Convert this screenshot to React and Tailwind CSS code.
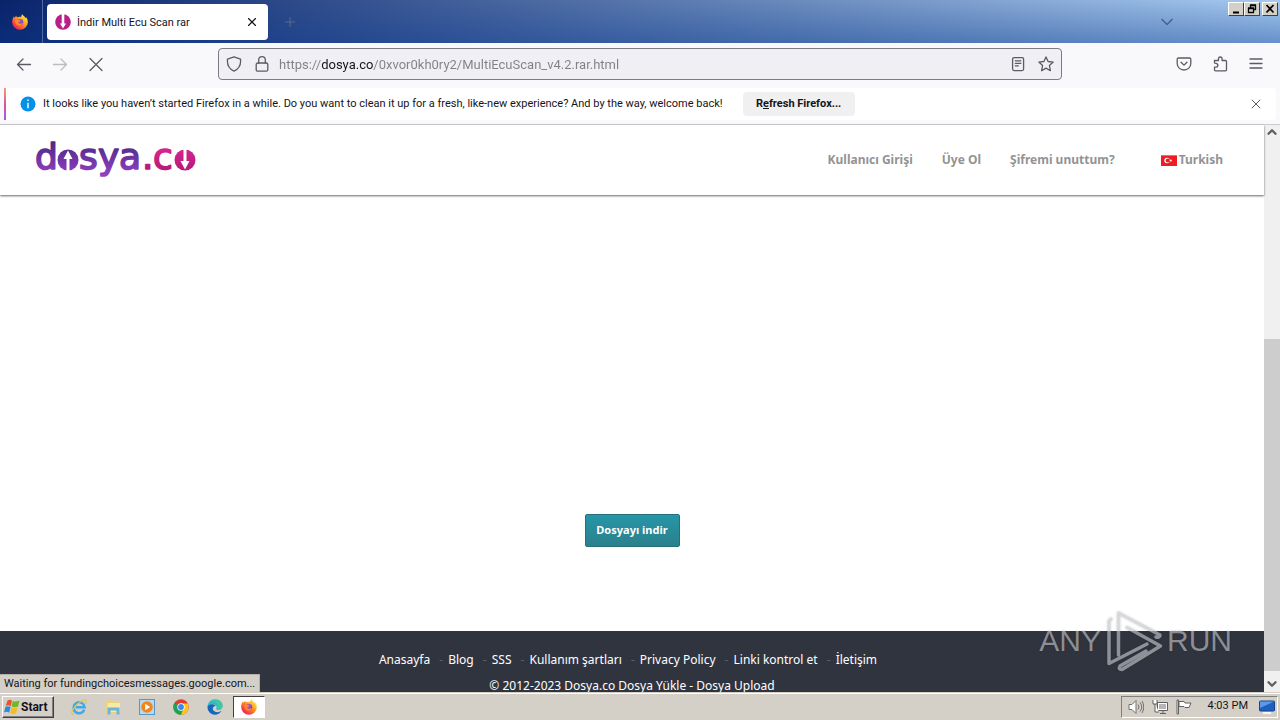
import React from "react";
import { X, Plus, ChevronDown, ChevronUp } from "lucide-react";

const navLinks = ["Kullanıcı Girişi", "Üye Ol", "Şifremi unuttum?"];

const footerLinks = [
  "Anasayfa",
  "Blog",
  "SSS",
  "Kullanım şartları",
  "Privacy Policy",
  "Linki kontrol et",
  "İletişim",
];

function FirefoxIcon({ id }) {
  return (
    <svg viewBox="0 0 16 16" className="h-4 w-4 shrink-0" aria-hidden="true">
      <defs>
        <linearGradient id={`${id}-body`} x1="0.9" y1="0.1" x2="0.2" y2="0.9">
          <stop offset="0" stopColor="#fff14a" />
          <stop offset="0.4" stopColor="#ffa21e" />
          <stop offset="0.75" stopColor="#ff5238" />
          <stop offset="1" stopColor="#e8225c" />
        </linearGradient>
        <radialGradient id={`${id}-globe`} cx="0.4" cy="0.3" r="0.8">
          <stop offset="0" stopColor="#b45be0" />
          <stop offset="1" stopColor="#6a35b5" />
        </radialGradient>
      </defs>
      <path
        d="M10.4 0.2c-1 .8-1.3 2-1.200 2.800C7.800 2.500 6.300 2.700 5.200 3.300 4.600 3 4.300 2.300 4.300 1.700 3.500 2.300 3 3 2.700 3.700c-.5-.3-.7-.9-.7-1.400C.9 3.900.2 6 .2 8.200a7.800 7.600 0 0 0 15.600 0c0-2.200-.7-4-1.800-5.200.1.500.2 1 .1 1.400C13 2.600 11.200 2 10.400.2Z"
        fill={`url(#${id}-body)`}
      />
      <circle cx="8" cy="8.200" r="3.200" fill={`url(#${id}-globe)`} />
      <path
        d="M3.200 6.200c.8-.9 2-.9 2.900-.4.700.5 1.700.3 2.200.6-.2.800-1.200 1.100-1.900 1.500-.2 1.200.9 2 2.200 1.800 1-.2 1.500-.8 2.300-.5-.5 1.700-2 2.700-3.800 2.500-2.500-.2-4.200-2.500-3.900-5.500Z"
        fill="#ff8a22"
      />
    </svg>
  );
}

function DosyaLogo() {
  return (
    <a href="#home" aria-label="dosya.co" className="block">
      <svg viewBox="0 0 168 54" className="h-[54px] w-[168px]" fontFamily="DejaVu Sans, sans-serif" fontSize="36">
        <defs>
          <linearGradient id="logo-violet" gradientUnits="userSpaceOnUse" x1="0" y1="9" x2="0" y2="43">
            <stop offset="0" stopColor="#4b2a85" />
            <stop offset="1" stopColor="#9440c4" />
          </linearGradient>
          <linearGradient id="logo-pink" gradientUnits="userSpaceOnUse" x1="0" y1="16" x2="0" y2="38">
            <stop offset="0" stopColor="#d3268f" />
            <stop offset="1" stopColor="#b51a78" />
          </linearGradient>
        </defs>
        <g fill="url(#logo-violet)" stroke="url(#logo-violet)" strokeWidth="1.600" strokeLinejoin="round">
          <text x="-1" y="36">d</text>
          <text x="43" y="36">s</text>
          <text x="62" y="36">y</text>
          <text x="83" y="36">a</text>
        </g>
        <g fill="url(#logo-pink)" stroke="url(#logo-pink)" strokeWidth="1.600" strokeLinejoin="round">
          <text x="106" y="36">.</text>
          <text x="117" y="36">c</text>
        </g>
        <circle cx="32" cy="27" r="10.500" fill="url(#logo-violet)" />
        <path d="M32 17.500l4.500 8.500H33.500v12h-3V26h-3Z" fill="#fff" />
        <circle cx="149" cy="27" r="10.500" fill="url(#logo-pink)" />
        <path d="M149 36.500l-4.500-8.500h3V16h3v12h3Z" fill="#fff" />
      </svg>
    </a>
  );
}

function WindowButton({ label, children }) {
  return (
    <button
      aria-label={label}
      className="flex h-3.5 w-4 items-center justify-center border border-t-white border-r-[#404040] border-b-[#404040] border-l-white bg-[#d4d0c8]"
    >
      <svg viewBox="0 0 12 12" className="h-3 w-3" fill="none" stroke="#000" strokeWidth="1.300">
        {children}
      </svg>
    </button>
  );
}

function TitleBar() {
  return (
    <header className="flex h-[43px] shrink-0 items-stretch bg-[linear-gradient(to_bottom,transparent,#0a3a9066),linear-gradient(to_right,#0a246a,#a6caf0)]">
      <div className="flex w-[43px] items-center justify-center border-r border-[#5169a5] pr-0.5">
        <FirefoxIcon id="fx-view" />
      </div>
      <div className="mt-1 mb-[3px] ml-1 flex w-[221px] items-center rounded bg-white px-2">
        <svg viewBox="0 0 16 16" className="h-4 w-4" aria-hidden="true">
          <circle cx="8" cy="8" r="7.800" fill="#b81f88" />
          <path d="M8 14.500 5 9.500h1.700V0h2.600v9.500H11Z" fill="#fff" />
        </svg>
        <span className="ml-1.5 flex-1 pt-0.5 text-[11px]">İndir Multi Ecu Scan rar</span>
        <button aria-label="Close tab" className="flex h-4 w-4 items-center justify-center">
          <X size={14} strokeWidth={2} />
        </button>
      </div>
      <button aria-label="New tab" className="ml-3.5 flex w-4 items-center justify-center text-[#5a6a80]">
        <Plus size={18} strokeWidth={1.500} />
      </button>
      <div className="flex-1" />
      <button aria-label="List all tabs" className="mr-[51px] text-[#4a648f]">
        <ChevronDown size={20} strokeWidth={2} />
      </button>
      <div className="mt-0.5 mr-0.5 flex items-start">
        <WindowButton label="Minimize">
          <path d="M3 9.500h6" strokeWidth="2" />
        </WindowButton>
        <WindowButton label="Restore">
          <path d="M4.500 5V2.500h5v4H8M2.500 5.500h5v4h-5zM4 2h6M2 5h6" />
        </WindowButton>
        <div className="w-0.5" />
        <WindowButton label="Close">
          <path d="M2.500 2l7 7.500M9.500 2l-7 7.500" strokeWidth="1.800" />
        </WindowButton>
      </div>
    </header>
  );
}

function ToolIcon({ children }) {
  return (
    <svg
      viewBox="0 0 16 16"
      className="h-4 w-4"
      fill="none"
      stroke="currentColor"
      strokeWidth="1.300"
      strokeLinecap="round"
      strokeLinejoin="round"
      aria-hidden="true"
    >
      {children}
    </svg>
  );
}

function Toolbar() {
  return (
    <nav className="flex h-[45px] shrink-0 items-center bg-[#f9f9fb] px-4 pb-[3px] text-[#5b5b66]">
      <div className="flex flex-[202] items-center gap-5">
        <button aria-label="Back">
          <ToolIcon>
            <path d="M1.500 8.500h13M7 3 1.500 8.500 7 14" />
          </ToolIcon>
        </button>
        <button aria-label="Forward" className="text-[#bcbcc2]">
          <ToolIcon>
            <path d="M1.500 8.500h13M9 3l5.500 5.500L9 14" />
          </ToolIcon>
        </button>
        <button aria-label="Stop">
          <ToolIcon>
            <path d="m2 2.500 12 12M14 2.500l-12 12" />
          </ToolIcon>
        </button>
      </div>
      <div className="flex h-8 min-w-0 flex-[828] items-center rounded border border-[#7c7c85] bg-[#f0f0f4] px-[7px]">
        <button aria-label="Site protection">
          <ToolIcon>
            <path d="M8 .8 14.500 3.200c.6 5.600-1.500 9.800-6.500 12-5-2.200-7.100-6.400-6.500-12Z" />
          </ToolIcon>
        </button>
        <button aria-label="Connection security" className="ml-3">
          <ToolIcon>
            <rect x="2.200" y="7" width="11.600" height="8.200" rx="1.500" />
            <path d="M4.700 7V4a3.300 3.300 0 0 1 6.600 0v3" />
          </ToolIcon>
        </button>
        <input
          aria-label="Address"
          type="text"
          defaultValue="https://dosya.co/0xvor0kh0ry2/MultiEcuScan_v4.2.rar.html"
          className="ml-[9px] min-w-0 flex-1 bg-[linear-gradient(to_right,#808085_43px,#15141a_43px,#15141a_94px,#808085_94px)] bg-clip-text pt-0.5 text-[13px] text-transparent outline-none"
        />
        <button aria-label="Reader view">
          <ToolIcon>
            <rect x="2.600" y="1.600" width="11" height="13" rx="1.500" />
            <path d="M5.300 4.800h5.600M5.300 7.300h5.600M5.300 9.800h3" />
          </ToolIcon>
        </button>
        <button aria-label="Bookmark" className="ml-3">
          <ToolIcon>
            <path d="m8 .9 2.100 4.600 5.100.6-3.800 3.400 1 5.200L8 12.100l-4.400 2.600 1-5.200L.8 6.100l5.100-.6Z" />
          </ToolIcon>
        </button>
      </div>
      <div className="flex flex-[202] items-center justify-end gap-5">
        <button aria-label="Pocket">
          <ToolIcon>
            <path d="M2.400 2h11.200q1.200 0 1.200 1.300v4.200a6.800 6.500 0 0 1-13.600 0V3.300Q1.200 2 2.400 2Z" />
            <path d="m5 6.200 3 2.900 3-2.900" />
          </ToolIcon>
        </button>
        <button aria-label="Extensions">
          <ToolIcon>
            <path d="M2.500 7V4.500h4V2.800a1.800 1.800 0 0 1 3.600 0v1.700h3.400q1 0 1 1v8.300q0 1-1 1h-10q-1 0-1-1v-2.600H4a1.700 1.700 0 0 0 0-3.700Z" />
          </ToolIcon>
        </button>
        <button aria-label="Menu">
          <ToolIcon>
            <path d="M2 3h12M2 7.500h12M2 12h12" />
          </ToolIcon>
        </button>
      </div>
    </nav>
  );
}

function Notification() {
  return (
    <div className="shrink-0 border-b border-[#ccccd0] bg-[#f9f9fb] px-1 pb-1">
      <div className="flex h-8 items-center rounded bg-white">
        <div className="h-full w-0.5 bg-linear-to-b from-[#f59a72] via-[#e0509e] to-[#9d5be0]" />
        <svg viewBox="0 0 16 16" className="ml-3.5 h-4 w-4" aria-hidden="true">
          <circle cx="8" cy="8" r="7.500" fill="#0790e8" />
          <path d="M8 3.500v1.600M8 6.800v5.400" stroke="#fff" strokeWidth="1.400" />
        </svg>
        <p className="ml-[7px] text-[11px] whitespace-nowrap">
          It looks like you haven’t started Firefox in a while. Do you want to clean it up for a
          fresh, like-new experience? And by the way, welcome back!
        </p>
        <button className="ml-5 h-6 w-28 rounded bg-[#f0f0f1] text-[11px] font-bold whitespace-nowrap">
          R<span className="underline">e</span>fresh Firefox...
        </button>
        <button aria-label="Dismiss" className="mr-3 ml-auto text-[#5b5b66]">
          <X size={16} strokeWidth={1.500} />
        </button>
      </div>
    </div>
  );
}

function SiteHeader() {
  return (
    <header className="relative flex h-[70px] shrink-0 items-center justify-between bg-white pr-[41px] pl-9 shadow-[0_1px_2px_#00000099]">
      <DosyaLogo />
      <div className="flex items-center text-[12px] font-bold text-[#939393]">
        <nav className="flex gap-[29px]">
          {navLinks.map((label) => (
            <a key={label} href="#account">{label}</a>
          ))}
        </nav>
        <button className="ml-[46px] flex items-center gap-0.5">
          <svg viewBox="0 0 16 11" className="h-[11px] w-4" aria-hidden="true">
            <rect width="16" height="11" fill="#f01c24" />
            <path d="M0 .5h16" stroke="#f46b70" />
            <circle cx="6" cy="5.500" r="2.700" fill="#fff" />
            <circle cx="6.800" cy="5.500" r="2.100" fill="#f01c24" />
            <path d="m8.400 5.500 1-.4.100-1.100.7.900 1-.3-.6.900.6.900-1-.3-.7.900-.1-1.100Z" fill="#fff" />
          </svg>
          Turkish
        </button>
      </div>
    </header>
  );
}

function SiteFooter() {
  return (
    <footer className="h-[61px] shrink-0 overflow-hidden bg-[#30343f] pt-5 text-center text-[12px] leading-[18px] text-white">
      <nav className="flex justify-center pr-2">
        {footerLinks.map((label, i) => (
          <React.Fragment key={label}>
            {i > 0 && <span className="w-[18px] pl-1 text-[#59606c]">-</span>}
            <a href="#page">{label}</a>
          </React.Fragment>
        ))}
      </nav>
      <p className="mt-2">© 2012-2023 Dosya.co Dosya Yükle - Dosya Upload</p>
    </footer>
  );
}

function Watermark() {
  return (
    <div className="absolute right-8 bottom-5 flex h-[62px] items-center gap-1 font-['Liberation_Sans',sans-serif] text-[30px] leading-10 text-[#d2d4d8]/60 [text-shadow:0_0_2px_#00000040]">
      <span>ANY</span>
      <svg
        viewBox="0 0 58 62"
        className="h-[62px] w-[58px] drop-shadow-[0_0_1px_#00000040]"
        fill="none"
        stroke="#d2d4d8"
        strokeOpacity="0.600"
        strokeWidth="3.500"
        strokeLinejoin="round"
        strokeLinecap="round"
        aria-hidden="true"
      >
        <path d="M6 9 4 11v42.500L42 34" />
        <path d="M13.500 45V3L55 25q0 3-4 2" />
        <path d="M22 17.500 55.500 36 17 59.500q-4 0-2-3.500l26-15" />
      </svg>
      <span>RUN</span>
    </div>
  );
}

function Scrollbar() {
  return (
    <div className="flex w-4 shrink-0 flex-col items-center bg-[#f0f0f0] text-[#606060]">
      <ChevronUp size={14} strokeWidth={4} />
      <div className="flex-[200]" />
      <div className="w-full flex-[333] bg-[#cdcdcd]" />
      <div className="flex h-[21px] items-center pt-1"><ChevronDown size={14} strokeWidth={4} /></div>
    </div>
  );
}

function TaskIcon({ label, children }) {
  return (
    <button aria-label={label} className="flex h-[22px] w-8 items-center justify-center">
      <svg viewBox="0 0 16 16" className="h-4 w-4">{children}</svg>
    </button>
  );
}

function Taskbar() {
  return (
    <footer className="flex h-7 shrink-0 items-center border-t border-[#d4d0c8] bg-[#d4d0c8] px-0.5 text-[11px] shadow-[inset_0_1px_0_#fff]">
      <button className="flex h-[22px] w-[52px] items-center gap-px border border-t-white border-r-[#404040] border-b-[#404040] border-l-white pl-px text-[12px] font-bold shadow-[inset_-1px_-1px_0_#808080]">
        <svg viewBox="0 0 16 16" className="h-4 w-4 shrink-0" aria-hidden="true">
          <path d="M3.500 1.500Q6 0 8 1.600L6.800 7.200Q4.500 5.600 1.700 7Z" fill="#e75724" />
          <path d="M8.800 2q3 1.300 6.700-.5L14 7.400q-3.800 1.400-6.300.1Z" fill="#70b52c" />
          <path d="M1.500 7.800q2.800-1.300 5.100.2l-1.500 5.700q-2.300-1.500-5.100-.3Z" fill="#288bdd" />
          <path d="M7.400 8.400q2.600 1.300 6.300.2l-1.600 5.700q-3.700 1.400-6-.2Z" fill="#f5bc27" />
        </svg>
        Start
      </button>
      <div className="ml-[9px] flex items-center gap-0.5">
        <TaskIcon label="Internet Explorer">
          <path d="M13.300 10.700A5.500 5.500 0 1 1 13.600 8.300H4.500" fill="none" stroke="#3fa9e8" strokeWidth="2.500" />
          <path d="M3.200 14.700C.2 16.500-.1 13.500 2.500 9.600 5.800 4.700 12.700-.3 14.700 1.300c.8.600.5 2-.5 3.500" fill="none" stroke="#e8c24d" strokeWidth="1.200" />
        </TaskIcon>
        <TaskIcon label="Explorer">
          <path d="M1 1.500h5L7 3h8v11.500H1Z" fill="#ecd27b" />
          <path d="M2.500 4h12.500v9H2.500Z" fill="#f8e9a4" />
          <path d="M2.500 8.500h12V15.500h-3v-4h-6v4h-3Z" fill="#6bb5dc" />
        </TaskIcon>
        <TaskIcon label="Media Player">
          <rect x=".5" y=".5" width="15" height="15" fill="#b7d9f0" stroke="#5796c8" />
          <circle cx="8" cy="8" r="5.800" fill="#f2851b" />
          <path d="m6.200 4.800 5 3.200-5 3.200Z" fill="#fff" />
        </TaskIcon>
        <TaskIcon label="Chrome">
          <circle cx="8" cy="8" r="7.700" fill="#e33b2e" />
          <path d="M8 8 1.300 4.200A7.700 7.700 0 0 0 8 15.700l3.500-6.200Z" fill="#1da353" />
          <path d="M8 8h3.300L8 15.700A7.700 7.700 0 0 0 14.700 4.500H8Z" fill="#fbc912" />
          <circle cx="8" cy="8" r="3.700" fill="#fff" />
          <circle cx="8" cy="8" r="2.900" fill="#4085ee" />
        </TaskIcon>
        <TaskIcon label="Edge">
          <path d="M.4 8A7.700 7.700 0 0 1 8 .3c5 0 7.700 3.300 7.700 6.500 0 2.800-2 4.200-4.200 4.200-2 0-2.700-.8-2.200-1.600C11 6.800 6 4 3 6 1.500 6.600.6 7.500.4 8Z" fill="#2bbccb" />
          <path d="M8 .3c5 0 7.700 3.300 7.700 6.500 0 2.800-2 4.200-4.200 4.200q-1.700 0-2-.8C12 7 10 2 4.500 1.200Z" fill="#58cf78" opacity=".5" />
          <path d="M.4 8C1.500 4.500 7 4.400 8.800 7 6 7 5 9.500 6.500 11.500c2 2.400 5.700 2.100 8 .3C13 14.500 10.500 15.700 8 15.700A7.700 7.700 0 0 1 .4 8Z" fill="#1566bd" />
        </TaskIcon>
        <button aria-label="Firefox" className="flex h-[22px] w-8 items-center justify-center border border-t-[#404040] border-r-white border-b-white border-l-[#404040] bg-white">
          <FirefoxIcon id="fx-task" />
        </button>
      </div>
      <div className="ml-auto flex h-[22px] items-center border border-t-[#808080] border-r-white border-b-white border-l-[#808080] pr-0.5 pl-1.5">
        <div className="flex gap-2">
          <svg viewBox="0 0 16 16" className="h-4 w-4" fill="#fff" stroke="#707070" aria-hidden="true">
            <path d="M1 5.500h3l4-4v13l-4-4H1Z" />
            <path d="M10 5.500q2 2.500 0 5M12 3.500q3.500 4.500 0 9M14 2q3.500 6 0 12" fill="none" />
          </svg>
          <svg viewBox="0 0 16 16" className="h-4 w-4" fill="#fff" stroke="#606060" aria-hidden="true">
            <path d="M5.500 3.500h10v8h-10zM8 14.500h6M11 12v2" />
            <path d="M7 5h7v5H7z" fill="#b5b5b5" stroke="none" />
            <path d="M1 1v4h4V1M3 5v8h4" />
          </svg>
          <svg viewBox="0 0 16 16" className="h-4 w-4" fill="#fff" stroke="#606060" aria-hidden="true">
            <path d="M1 1h1.500v14H1zM3 2.500h5l1 1.500h6l-2 4.500H9L8 7.500H3Z" />
          </svg>
        </div>
        <time className="ml-4">4:03 PM</time>
        <svg viewBox="0 0 16 16" className="ml-[11px] h-4 w-4" aria-hidden="true">
          <rect x=".5" y="2" width="15" height="10" rx="1" fill="#1f5fc1" stroke="#17458b" />
          <path d="M1 2.500h14L1 9Z" fill="#5b9ae8" />
          <path d="M4 14h8" stroke="#f6f6f6" strokeWidth="2" />
        </svg>
      </div>
    </footer>
  );
}

export default function App() {
  return (
    <div className="flex h-screen flex-col overflow-hidden bg-white font-['Roboto',sans-serif] text-[#15141a]">
      <TitleBar />
      <Toolbar />
      <Notification />

      <div className="flex min-h-0 flex-1">
        <div className="relative flex min-w-0 flex-1 flex-col font-['Noto_Sans',sans-serif]">
          <SiteHeader />
          <main className="flex flex-1 items-end justify-center pb-[84px]">
            <button className="h-[33px] w-[95px] rounded-xs border border-[#24717b] bg-linear-to-b from-[#2596a8] to-[#2b808b] text-[11px] font-bold text-white">
              Dosyayı indir
            </button>
          </main>
          <SiteFooter />
          <Watermark />
          <div className="absolute bottom-0 left-0 h-[18px] border-t border-r border-[#b5b1aa] bg-[#d4d0c8] px-1 font-['Roboto',sans-serif] text-[11px] leading-[18px]">
            Waiting for fundingchoicesmessages.google.com...
          </div>
        </div>
        <Scrollbar />
      </div>

      <Taskbar />
    </div>
  );
}
